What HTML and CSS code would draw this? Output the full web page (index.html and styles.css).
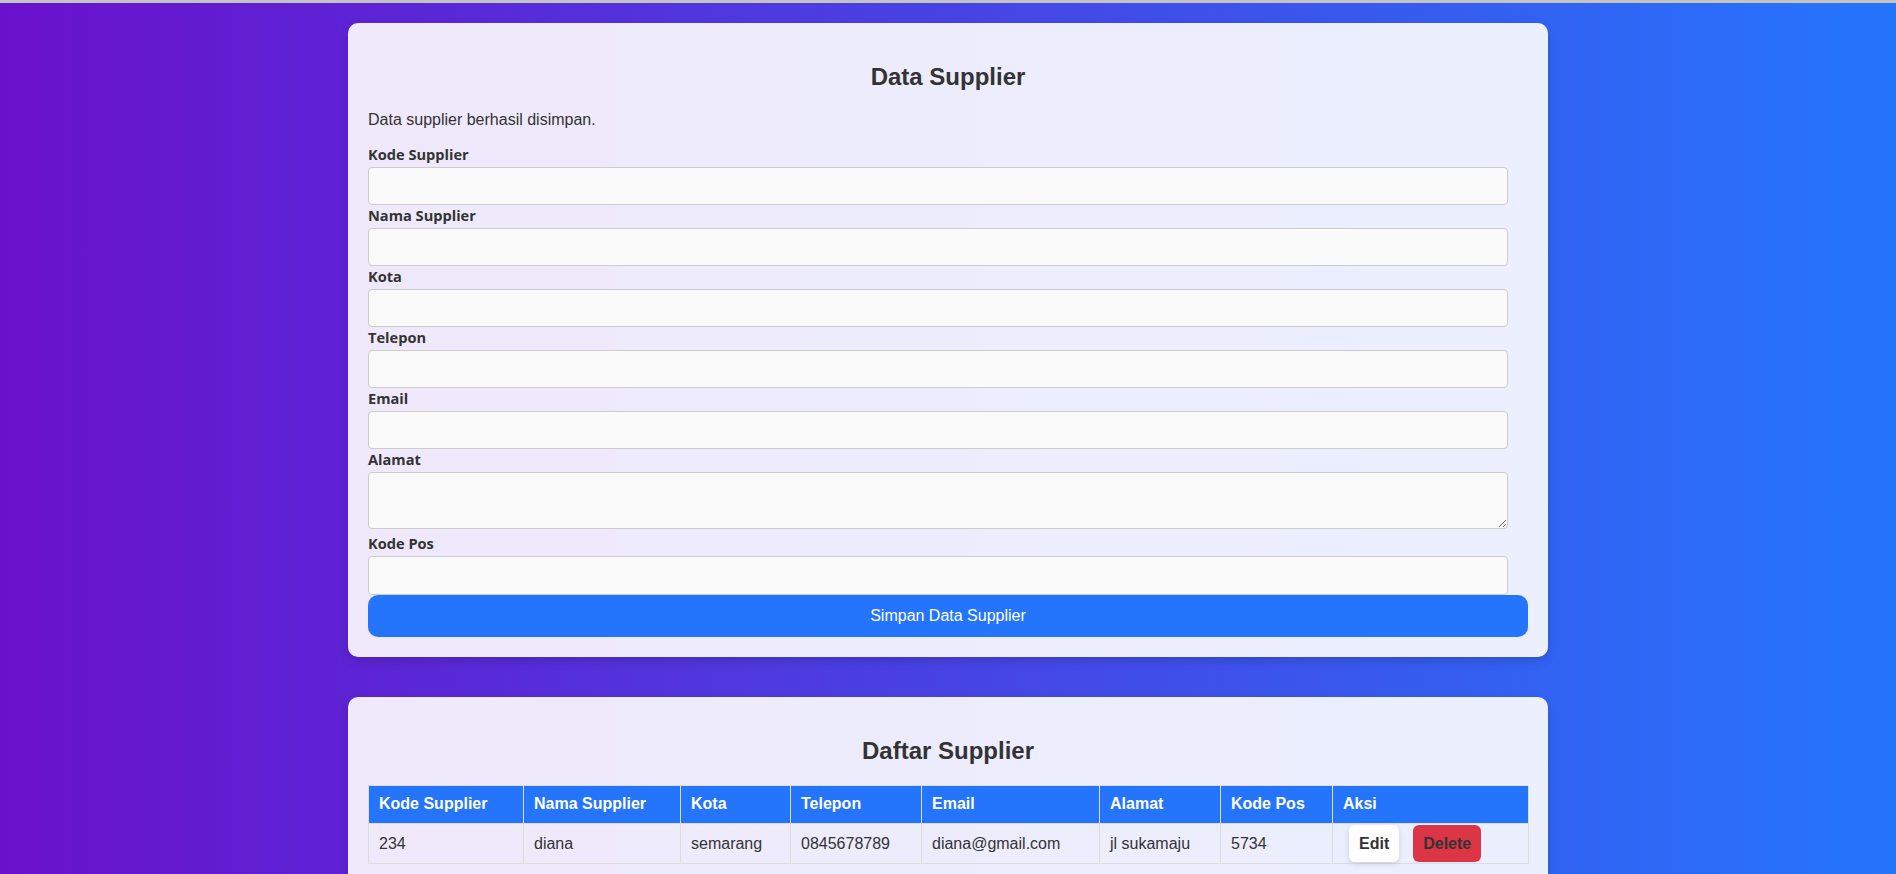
FILE: index.html
```html
<!DOCTYPE html>
<html lang="id">
<head>
<meta charset="utf-8">
<title>Data Supplier</title>
<link rel="stylesheet" href="styles.css">
</head>
<body>
<div class="topline"></div>
<main class="page">
  <section class="card">
    <h2 class="card-title">Data Supplier</h2>
    <p class="message">Data supplier berhasil disimpan.</p>
    <form class="form">
      <label class="label">Kode Supplier</label>
      <input class="field" type="text">
      <label class="label">Nama Supplier</label>
      <input class="field" type="text">
      <label class="label">Kota</label>
      <input class="field" type="text">
      <label class="label">Telepon</label>
      <input class="field" type="text">
      <label class="label">Email</label>
      <input class="field" type="text">
      <label class="label">Alamat</label>
      <textarea class="field area"></textarea>
      <label class="label">Kode Pos</label>
      <input class="field last" type="text">
      <button class="submit" type="button">Simpan Data Supplier</button>
    </form>
  </section>

  <section class="card">
    <h2 class="card-title">Daftar Supplier</h2>
    <table class="table">
      <colgroup>
        <col class="c1"><col class="c2"><col class="c3"><col class="c4">
        <col class="c5"><col class="c6"><col class="c7"><col class="c8">
      </colgroup>
      <thead>
        <tr>
          <th>Kode Supplier</th>
          <th>Nama Supplier</th>
          <th>Kota</th>
          <th>Telepon</th>
          <th>Email</th>
          <th>Alamat</th>
          <th>Kode Pos</th>
          <th>Aksi</th>
        </tr>
      </thead>
      <tbody>
        <tr>
          <td>234</td>
          <td>diana</td>
          <td>semarang</td>
          <td>0845678789</td>
          <td>diana@gmail.com</td>
          <td>jl sukamaju</td>
          <td>5734</td>
          <td class="actions">
            <div class="action-row">
              <button class="btn btn-edit" type="button">Edit</button>
              <button class="btn btn-delete" type="button">Delete</button>
            </div>
          </td>
        </tr>
      </tbody>
    </table>
  </section>
</main>
</body>
</html>
```

FILE: styles.css
```css
html, body {
  margin: 0;
  padding: 0;
}

body {
  font-family: "Liberation Sans", Arial, sans-serif;
  font-size: 16px;
  color: #333;
  background: linear-gradient(to right, #6a11cb, #2575fc);
  min-height: 100vh;
}

.topline {
  height: 3px;
  background: #c3c3c3;
}

.page {
  padding: 20px 0 20px;
  display: flex;
  flex-direction: column;
  align-items: center;
  gap: 40px;
}

.card {
  width: 1200px;
  box-sizing: border-box;
  padding: 20px;
  background: rgba(255, 255, 255, 0.9);
  border-radius: 10px;
  box-shadow: 0 4px 10px rgba(0, 0, 0, 0.15);
}

.card-title {
  margin: 20px 0;
  font-size: 24px;
  line-height: 28px;
  font-weight: bold;
  text-align: center;
  color: #333;
}

.message {
  margin: 0 0 16px;
  font-size: 16px;
  line-height: 18px;
}

.form {
  display: flex;
  flex-direction: column;
  align-items: flex-start;
}

.label {
  display: block;
  font-family: "Open Sans", "Noto Sans", sans-serif;
  font-weight: 700;
  font-size: 14.6px;
  line-height: 18px;
  margin: 0 0 4px 0;
  color: #333;
}

.field {
  display: block;
  box-sizing: border-box;
  width: calc(100% - 20px);
  height: 38px;
  margin: 0 0 1px 0;
  padding: 8px 10px;
  background: #fafafa;
  border: 1px solid #ccc;
  border-radius: 4px;
  font-family: "Liberation Sans", Arial, sans-serif;
  font-size: 16px;
}

.field.area {
  height: 57px;
  margin-bottom: 5px;
  resize: vertical;
}

.field.last {
  margin-bottom: 0;
  height: 39px;
}

.submit {
  width: 100%;
  height: 42px;
  border: none;
  border-radius: 10px;
  background: #2575fc;
  color: #fff;
  font-family: "Liberation Sans", Arial, sans-serif;
  font-size: 16px;
  cursor: pointer;
}

.table {
  width: 100%;
  border-collapse: collapse;
  table-layout: fixed;
}

.c1 { width: 155px; }
.c2 { width: 157px; }
.c3 { width: 110px; }
.c4 { width: 131px; }
.c5 { width: 178px; }
.c6 { width: 121px; }
.c7 { width: 112px; }
.c8 { width: 196px; }

.table th,
.table td {
  border: 1px solid #ddd;
  text-align: left;
  font-size: 16px;
  line-height: 18px;
}

.table th {
  background: #2575fc;
  color: #fff;
  font-weight: bold;
  padding: 9px 10px 10px;
}

.table td {
  padding: 10px;
  color: #333;
}

.table td.actions {
  padding: 1px 16px;
}

.action-row {
  display: flex;
  gap: 14px;
}

.btn {
  height: 37px;
  padding: 0 10px;
  border: none;
  border-radius: 6px;
  font-family: "Liberation Sans", Arial, sans-serif;
  font-size: 16px;
  font-weight: bold;
  color: #333;
  cursor: pointer;
}

.btn-edit {
  background: #fff;
  box-shadow: 0 2px 6px rgba(0, 0, 0, 0.12);
}

.btn-delete {
  background: #dc3545;
}
```
